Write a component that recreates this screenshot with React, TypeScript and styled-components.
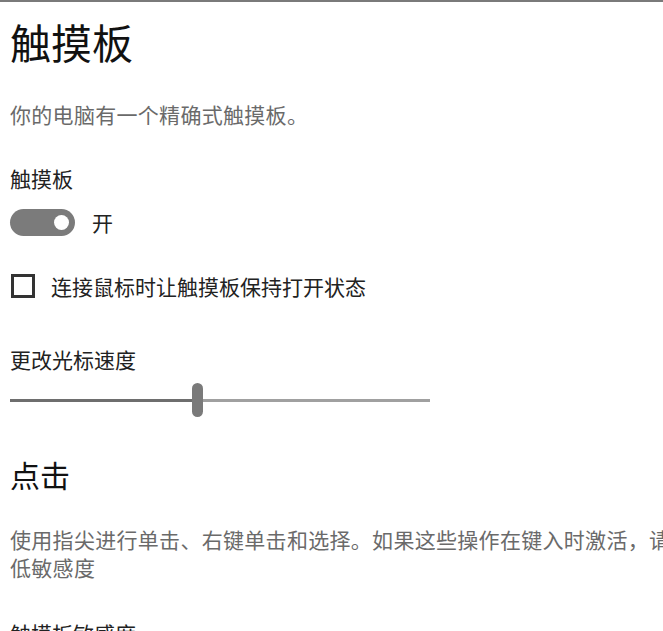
import React from 'react';
import styled, { createGlobalStyle } from 'styled-components';

const Global = createGlobalStyle`
  html, body { margin: 0; padding: 0; background: #fff; overflow: hidden; }
  body { font-family: "Noto Sans CJK SC", "Noto Sans", sans-serif; }
`;

const Page = styled.div`
  border-top: 2px solid #7a7a7a;
  padding-left: 10px;
  width: 700px;
  display: flex;
  flex-direction: column;
  align-items: flex-start;
`;

const Title = styled.h1<{ $size: number; $mt: number }>`
  margin: ${p => p.$mt}px 0 0;
  font-size: ${p => p.$size}px;
  line-height: 1;
  font-weight: 400;
  color: #111;
`;

const Desc = styled.p<{ $mt: number; $lh: number }>`
  margin: ${p => p.$mt}px 0 0;
  font-size: 21px;
  line-height: ${p => p.$lh}px;
  letter-spacing: 0.3px;
  color: #6a6a6a;
  width: 690px;
`;

const Label = styled.div<{ $mt: number }>`
  margin-top: ${p => p.$mt}px;
  font-size: 21px;
  line-height: 1;
  color: #222;
`;

const Row = styled.div<{ $mt: number; $gap: number }>`
  margin-top: ${p => p.$mt}px;
  display: flex;
  align-items: center;
  gap: ${p => p.$gap}px;
  font-size: 21px;
  line-height: 1;
  color: #222;
`;

const Toggle = styled.div`
  width: 65px;
  height: 27px;
  border-radius: 14px;
  background: #7b7b7b;
  display: flex;
  align-items: center;
  justify-content: flex-end;
  padding-right: 6px;
  box-sizing: border-box;
`;

const Knob = styled.div`
  width: 15px;
  height: 15px;
  border-radius: 50%;
  background: #fff;
`;

const Box = styled.div`
  width: 24px;
  height: 24px;
  box-sizing: border-box;
  border: 3px solid #333;
  margin-left: 1px;
`;

const Slider = styled.div`
  margin-top: 13px;
  width: 420px;
  height: 34px;
  display: flex;
  align-items: center;
`;

const Track = styled.div<{ $w: number; $c: string }>`
  height: 3px;
  background: ${p => p.$c};
  flex: ${p => (p.$w ? `0 0 ${p.$w}px` : '1')};
`;

const Thumb = styled.div`
  width: 11px;
  height: 34px;
  border-radius: 6px;
  background: #7a7a7a;
  flex: none;
`;

export default function App() {
  return (
    <>
      <Global />
      <Page>
        <Title $size={41} $mt={19}>触摸板</Title>
        <Desc $mt={42} $lh={20}>你的电脑有一个精确式触摸板。</Desc>
        <Label $mt={44}>触摸板</Label>
        <Row $mt={20} $gap={17}>
          <Toggle><Knob /></Toggle>
          <span>开</span>
        </Row>
        <Row $mt={38} $gap={16}>
          <Box />
          <span>连接鼠标时让触摸板保持打开状态</span>
        </Row>
        <Label $mt={51}>更改光标速度</Label>
        <Slider>
          <Track $w={182} $c="#6e6e6e" />
          <Thumb />
          <Track $w={0} $c="#a0a0a0" />
        </Slider>
        <Title $size={30} $mt={42}>点击</Title>
        <Desc $mt={36} $lh={28}>使用指尖进行单击、右键单击和选择。如果这些操作在键入时激活，请降低敏感度</Desc>
        <Label $mt={42}>触摸板敏感度</Label>
      </Page>
    </>
  );
}
